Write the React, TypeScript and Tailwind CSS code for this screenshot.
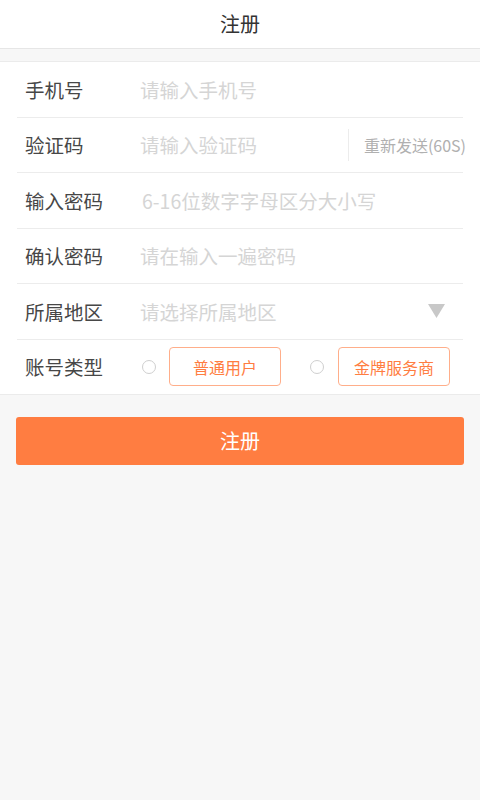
import React from "react";

const font = {
  fontFamily: '"Noto Sans CJK SC", "Noto Sans", "Liberation Sans", sans-serif',
};

function Row({
  label,
  children,
  last,
}: {
  label: string;
  children: React.ReactNode;
  last?: boolean;
}) {
  return (
    <div
      className={`mx-[17px] flex items-center ${
        last ? "h-[54px]" : "h-[55.5px] border-b border-[#ececec]"
      }`}
    >
      <div className="w-[123px] pl-[8px] text-[19.5px] text-[#474747]">{label}</div>
      <div className="flex flex-1 items-center">{children}</div>
    </div>
  );
}

function Placeholder({ text }: { text: string }) {
  return <span className="text-[19.5px] text-[#d5d5d5]">{text}</span>;
}

function Radio() {
  return (
    <span className="inline-block h-[14px] w-[14px] rounded-full border-[1.5px] border-[#cfcfcf]" />
  );
}

export default function App() {
  return (
    <div className="min-h-[800px] bg-[#f7f7f7]" style={font}>
      <header className="flex h-[49px] items-center justify-center border-b border-[#e6e6e6] bg-white">
        <span className="text-[20px] text-[#333333]">注册</span>
      </header>

      <div className="mt-[12px] border-y border-[#ebebeb] bg-white">
        <Row label="手机号">
          <Placeholder text="请输入手机号" />
        </Row>
        <Row label="验证码">
          <div className="flex flex-1 items-center">
            <Placeholder text="请输入验证码" />
          </div>
          <div className="h-[32px] w-px bg-[#ececec]" />
          <span className="ml-[15px] mr-[-3px] text-[16px] text-[#b0b0b0]">重新发送(60S)</span>
        </Row>
        <Row label="输入密码">
          <span className="ml-[2px]">
            <Placeholder text="6-16位数字字母区分大小写" />
          </span>
        </Row>
        <Row label="确认密码">
          <Placeholder text="请在输入一遍密码" />
        </Row>
        <Row label="所属地区">
          <div className="flex flex-1 items-center">
            <Placeholder text="请选择所属地区" />
          </div>
          <svg width="17" height="14" viewBox="0 0 17 14" className="mr-[18px]">
            <polygon points="0,0 17,0 8.5,14" fill="#c8c8c8" />
          </svg>
        </Row>
        <Row label="账号类型" last>
          <div className="ml-[2px] flex items-center">
            <Radio />
            <div className="ml-[13px] flex h-[39px] w-[112px] items-center justify-center rounded-[4px] border border-[#ffae8a] text-[16px] text-[#ff7d41]">
              普通用户
            </div>
          </div>
          <div className="ml-[29px] flex items-center">
            <Radio />
            <div className="ml-[14px] flex h-[39px] w-[112px] items-center justify-center rounded-[4px] border border-[#ffae8a] text-[16px] text-[#ff7d41]">
              金牌服务商
            </div>
          </div>
        </Row>
      </div>

      <div className="px-[16px] pt-[22px]">
        <button className="flex h-[48px] w-full items-center justify-center rounded-[3px] bg-[#ff7d41] text-[20px] text-white">
          注册
        </button>
      </div>
    </div>
  );
}
